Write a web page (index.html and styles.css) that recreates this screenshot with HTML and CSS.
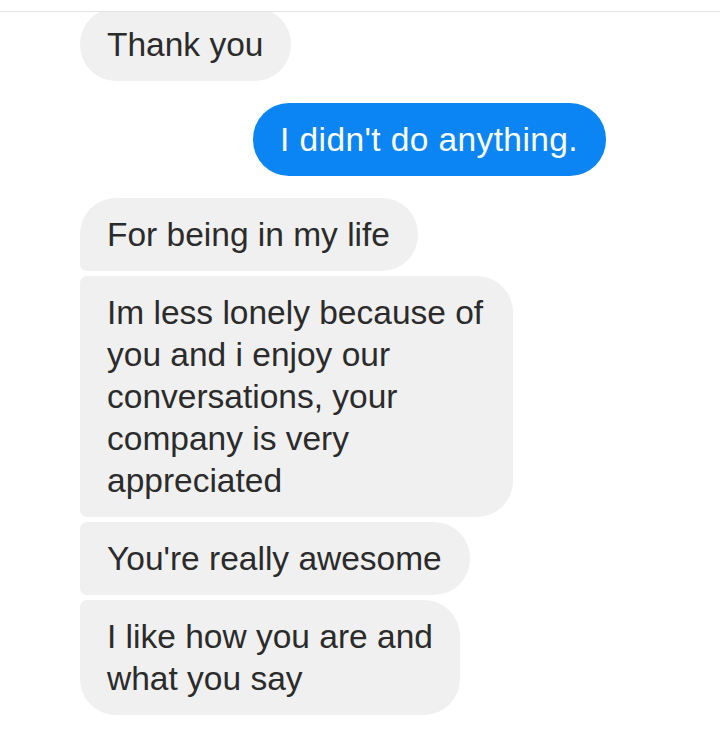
FILE: index.html
```html
<!DOCTYPE html>
<html lang="en">
<head>
<meta charset="utf-8">
<title>Messages</title>
<link rel="stylesheet" href="styles.css">
</head>
<body>
<div class="screen">
  <div class="topbar"></div>
  <div class="thread">
    <div class="group in first">
      <div class="bubble solo">Thank you</div>
    </div>
    <div class="group out">
      <div class="bubble solo">I didn't do anything.</div>
    </div>
    <div class="group in">
      <div class="bubble head">For being in my life</div>
      <div class="bubble mid wide">Im less lonely because of you and i enjoy our conversations, your company is very appreciated</div>
      <div class="bubble mid">You're really awesome</div>
      <div class="bubble tail narrow">I like how you are and what you say</div>
    </div>
  </div>
</div>
</body>
</html>
```

FILE: styles.css
```css
html, body {
  margin: 0;
  padding: 0;
  background: #ffffff;
}

.screen {
  width: 720px;
  height: 730px;
  overflow: hidden;
  background: #ffffff;
  font-family: "Liberation Sans", Arial, sans-serif;
}

.topbar {
  height: 11px;
  border-bottom: 1px solid #e2e2e2;
}

.thread {
  display: flex;
  flex-direction: column;
  gap: 22px;
  padding: 0 114px 0 80px;
  overflow: hidden;
  height: 718px;
}

.group {
  display: flex;
  flex-direction: column;
  gap: 5px;
}

.group.first {
  margin-top: -4px;
}

.group.in {
  align-items: flex-start;
}

.group.out {
  align-items: flex-end;
}

.bubble {
  font-size: 33.5px;
  line-height: 42px;
  padding: 15.5px 28px 15.5px 27px;
  border-radius: 36px;
  background: #f0f0f0;
  color: #2b2b2b;
  box-sizing: border-box;
}

.out .bubble {
  background: #0c85f4;
  color: #ffffff;
  letter-spacing: 0.4px;
}

.bubble.head {
  border-bottom-left-radius: 7px;
}

.bubble.mid {
  border-top-left-radius: 7px;
  border-bottom-left-radius: 7px;
}

.bubble.tail {
  border-top-left-radius: 7px;
}

.bubble.wide {
  width: 433px;
}

.bubble.narrow {
  width: 380px;
  padding-right: 18px;
}
```
